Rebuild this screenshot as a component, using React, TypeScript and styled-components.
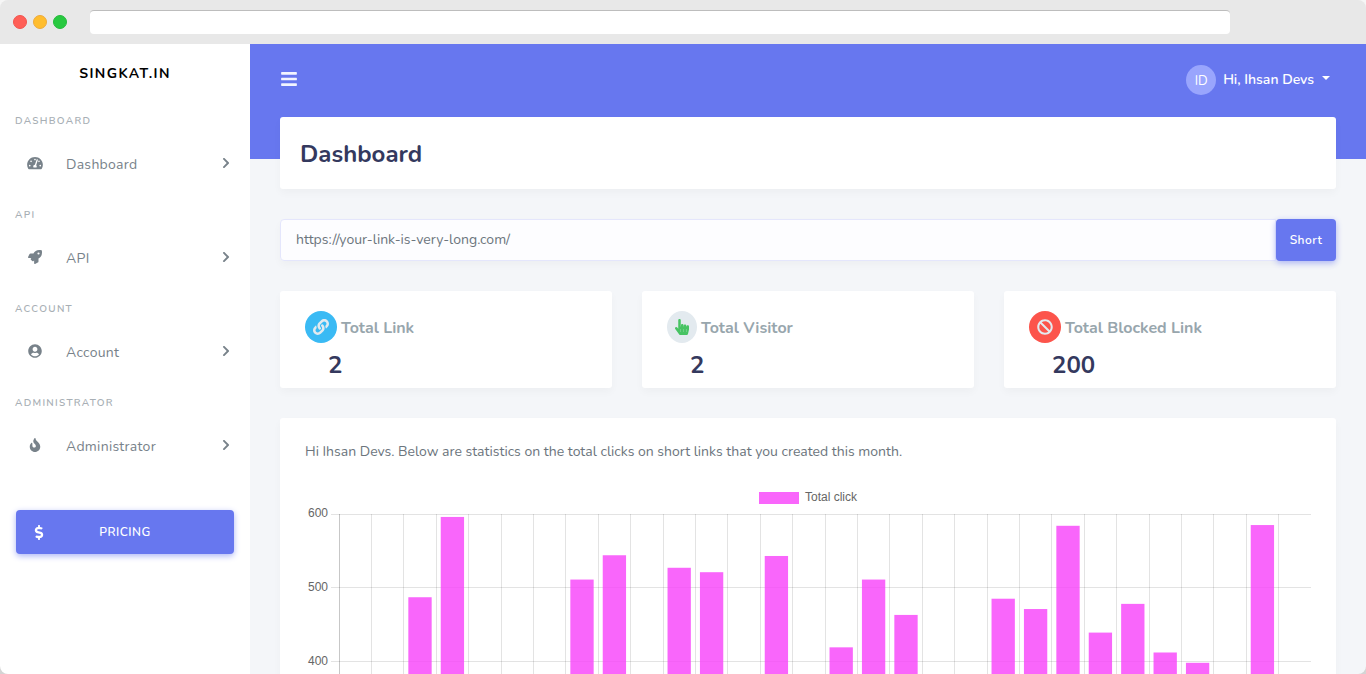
import React from 'react';
import styled, { createGlobalStyle } from 'styled-components';
import type { IconType } from 'react-icons';
import {
  FaBan,
  FaBars,
  FaChevronRight,
  FaDollarSign,
  FaFire,
  FaHandPointer,
  FaLink,
  FaRocket,
  FaTachometerAlt,
  FaUserCircle,
} from 'react-icons/fa';

const color = {
  primary: '#6777ef',
  heading: '#34395e',
  text: '#6c757d',
  muted: '#98a6ad',
  menu: '#78828a',
  light: '#e3eaef',
  canvas: '#f4f6f9',
};

const GlobalStyle = createGlobalStyle`
  *, *::before, *::after { box-sizing: border-box; }
  body {
    margin: 0;
    background: linear-gradient(#f6f6f6, #d4d4d4);
    color: ${color.text};
    font-family: Nunito, "Open Sans", sans-serif;
    font-size: 14px;
    line-height: 24px;
  }
  button, input { font: inherit; }
  h1, h2, p, ul { margin: 0; padding: 0; }
  a { color: inherit; text-decoration: none; }
`;

/* ---------- window frame ---------- */

const Frame = styled.div`
  display: flex;
  flex-direction: column;
  height: 100vh;
  border-radius: 8px;
  overflow: hidden;
`;

const TitleBar = styled.div`
  display: flex;
  align-items: center;
  flex: none;
  height: 44px;
  padding: 0 136px 0 13px;
  background: #e8e8e8;
`;

const Lights = styled.div`
  display: flex;
  gap: 6px;
  width: 77px;
`;

const Light = styled.span<{ $fill: string; $edge: string }>`
  width: 14px;
  height: 14px;
  border: 1px solid ${(p) => p.$edge};
  border-radius: 50%;
  background: ${(p) => p.$fill};
`;

const AddressBar = styled.input`
  flex: 1;
  min-width: 0;
  height: 24px;
  padding: 0 8px;
  border: 0;
  border-top: 1px solid #bdbdbd;
  border-radius: 4px;
  background: #fff;
`;

const Page = styled.div`
  display: flex;
  flex: 1;
  min-height: 0;
`;

/* ---------- sidebar ---------- */

const Sidebar = styled.aside`
  flex: none;
  width: 250px;
  padding-top: 1px;
  background: #fff;
  overflow: hidden;
`;

const Brand = styled.a`
  display: block;
  color: #000;
  font-weight: 700;
  line-height: 58px;
  letter-spacing: 0.1em;
  text-align: center;
`;

const MenuTitle = styled.h2`
  padding: 0 15px;
  color: #a8afb5;
  font-size: 10px;
  font-weight: 600;
  line-height: 37px;
  letter-spacing: 0.13em;
  text-transform: uppercase;
`;

const MenuLink = styled.a`
  display: flex;
  align-items: center;
  height: 50px;
  margin-bottom: 7px;
  padding: 0 18px 0 20px;
  color: ${color.menu};
  letter-spacing: 0.02em;
`;

const MenuIcon = styled.span`
  display: flex;
  justify-content: center;
  width: 30px;
  margin-right: 16px;
  padding-bottom: 4px;

  svg {
    width: 16px;
    height: 14px;
  }
`;

const MenuLabel = styled.span`
  flex: 1;
`;

const Chevron = styled(FaChevronRight)`
  width: 12px;
  height: 12px;
  margin-bottom: 4px;
`;

const Pricing = styled.a`
  display: grid;
  grid-template-columns: 14px 1fr 14px;
  align-items: center;
  height: 44px;
  margin: 38px 16px 0;
  padding: 0 16px;
  border-radius: 4px;
  background: ${color.primary};
  box-shadow: 0 2px 6px #acb5f6;
  color: #fff;
  font-size: 12px;
  font-weight: 600;
  letter-spacing: 0.04em;
  text-align: center;

  svg {
    width: 14px;
    height: 15px;
  }
`;

/* ---------- main column ---------- */

const Main = styled.main`
  flex: 1;
  min-width: 0;
  padding: 0 30px 30px;
  overflow-y: auto;
  scrollbar-width: none;
  background: linear-gradient(${color.primary} 115px, ${color.canvas} 115px);
`;

const Navbar = styled.header`
  display: flex;
  align-items: center;
  justify-content: space-between;
  height: 73px;
  padding-bottom: 2px;
  color: #fff;
`;

const IconButton = styled.button`
  display: flex;
  padding: 0 0 2px;
  border: 0;
  background: none;
  color: #f2f4ff;

  svg {
    width: 18px;
    height: 18px;
  }
`;

const UserButton = styled.button`
  display: flex;
  align-items: center;
  gap: 8px;
  padding: 0 6px 0 0;
  border: 0;
  background: none;
  color: #fff;
  font-weight: 600;
`;

const Avatar = styled.span`
  width: 30px;
  height: 30px;
  margin-right: -1px;
  border-radius: 50%;
  background: #99a5fd;
  color: #fff;
  font-size: 13px;
  font-weight: 400;
  line-height: 32px;
`;

const Caret = styled.span`
  margin-bottom: 4px;
  border: 4px solid transparent;
  border-top-color: currentColor;
  border-bottom-width: 0;
`;

const Card = styled.section`
  border-radius: 3px;
  background: #fff;
  box-shadow: 0 4px 8px rgba(0, 0, 0, 0.03);
`;

const Stack = styled.div`
  display: flex;
  flex-direction: column;
  gap: 30px;
`;

const HeadingCard = styled(Card)`
  padding: 23px 20px 21px;
`;

const Heading = styled.h1`
  color: ${color.heading};
  font-size: 24px;
  font-weight: 700;
  line-height: 28px;
`;

const ShortenForm = styled.form`
  display: flex;
  height: 42px;
  border-radius: 4px;
  box-shadow: 0 4px 8px rgba(0, 0, 0, 0.03);
`;

const LinkInput = styled.input`
  flex: 1;
  min-width: 0;
  padding: 0 15px;
  border: 1px solid #e4e6fc;
  border-radius: 4px 0 0 4px;
  background: #fdfdff;
  color: ${color.text};

  &::placeholder {
    color: ${color.text};
    opacity: 1;
  }
`;

const ShortButton = styled.button`
  min-width: 60px;
  padding: 0 12px;
  border: 0;
  border-radius: 4px;
  background: ${color.primary};
  box-shadow: 0 2px 6px #acb5f6;
  color: #fff;
  font-size: 12px;
  font-weight: 600;
  letter-spacing: 0.04em;
`;

const Stats = styled.div`
  display: grid;
  grid-template-columns: repeat(3, 1fr);
  gap: 30px;
`;

const StatCard = styled(Card)`
  padding: 20px 25px 0;
`;

const StatTitle = styled.h2`
  display: flex;
  align-items: center;
  gap: 4px;
  color: ${color.muted};
  font-size: 16px;
  font-weight: 700;
`;

const StatLabel = styled.span`
  padding-top: 2px;
`;

const Badge = styled.span<{ $bg: string; $fg: string; $iconWidth: number }>`
  display: flex;
  padding: 8px;
  border-radius: 50%;
  background: ${(p) => p.$bg};
  color: ${(p) => p.$fg};

  svg {
    width: ${(p) => p.$iconWidth}px;
    height: 16px;
  }
`;

const StatValue = styled.p`
  padding-left: 23px;
  color: ${color.heading};
  font-size: 24px;
  font-weight: 700;
  line-height: 45px;
`;

const ChartCard = styled(Card)`
  padding: 22px 25px 25px;
`;

const Intro = styled.p`
  margin-bottom: 18px;
`;

const ChartSvg = styled.svg`
  display: block;
  width: 100%;
  height: auto;

  text {
    fill: #666;
    font-family: "Liberation Sans", Arial, sans-serif;
    font-size: 12px;
  }
`;

/* ---------- data ---------- */

const menu: { title: string; label: string; icon: IconType }[] = [
  { title: 'Dashboard', label: 'Dashboard', icon: FaTachometerAlt },
  { title: 'API', label: 'API', icon: FaRocket },
  { title: 'Account', label: 'Account', icon: FaUserCircle },
  { title: 'Administrator', label: 'Administrator', icon: FaFire },
];

interface Stat {
  label: string;
  value: number;
  icon: IconType;
  iconWidth: number;
  bg: string;
  fg: string;
}

const stats: Stat[] = [
  { label: 'Total Link', value: 2, icon: FaLink, iconWidth: 16, bg: '#3abaf4', fg: color.light },
  { label: 'Total Visitor', value: 2, icon: FaHandPointer, iconWidth: 14, bg: color.light, fg: '#47c363' },
  { label: 'Total Blocked Link', value: 200, icon: FaBan, iconWidth: 16, bg: '#fc544b', fg: color.light },
];

const clicks = [
  0, 0, 487, 596, 0, 0, 0, 511, 544, 0, 527, 521, 0, 543, 0, 419, 511, 463, 0, 0, 485, 471, 584,
  439, 478, 412, 398, 0, 585, 0,
];

/* ---------- chart ---------- */

const ticks = [0, 100, 200, 300, 400, 500, 600];
const plot = { left: 34, right: 1006, top: 32, bottom: 474 };
const slot = (plot.right - plot.left) / clicks.length;
const yOf = (value: number) => plot.bottom - ((plot.bottom - plot.top) * value) / 600;

function ClickChart() {
  return (
    <ChartSvg viewBox="0 0 1006 503" role="img" aria-label="Total click">
      <rect x={454} y={10} width={40} height={12} fill="#f966fb" />
      <text x={500} y={19}>Total click</text>
      <g fill="#000" fillOpacity={0.11}>
        {ticks.map((v) => (
          <rect key={v} x={26} y={Math.floor(yOf(v))} width={980} height={1} />
        ))}
        {clicks.map((_, i) => (
          <rect
            key={i}
            x={Math.floor(plot.left + i * slot)}
            y={plot.top}
            width={1}
            height={plot.bottom - plot.top + 9}
            fillOpacity={i === 0 ? 0.22 : 0.11}
          />
        ))}
      </g>
      {ticks.map((v) => (
        <text key={v} x={23} y={Math.ceil(yOf(v)) + 3} textAnchor="end">{v}</text>
      ))}
      <g fill="#f740fa" fillOpacity={0.8}>
        {clicks.map((v, i) =>
          v > 0 ? (
            <rect
              key={i}
              x={plot.left + i * slot + slot * 0.14}
              y={yOf(v)}
              width={slot * 0.72}
              height={plot.bottom - yOf(v)}
            />
          ) : null,
        )}
      </g>
    </ChartSvg>
  );
}

export default function App() {
  return (
    <>
      <GlobalStyle />
      <Frame>
        <TitleBar>
          <Lights>
            <Light $fill="#ff5f57" $edge="#f2544d" />
            <Light $fill="#ffbd2e" $edge="#eeaa3a" />
            <Light $fill="#28c940" $edge="#24ba3b" />
          </Lights>
          <AddressBar aria-label="Address" />
        </TitleBar>
        <Page>
          <Sidebar>
            <Brand href="#">SINGKAT.IN</Brand>
            <nav>
              {menu.map(({ title, label, icon: Icon }) => (
                <React.Fragment key={title}>
                  <MenuTitle>{title}</MenuTitle>
                  <MenuLink href="#">
                    <MenuIcon><Icon /></MenuIcon>
                    <MenuLabel>{label}</MenuLabel>
                    <Chevron />
                  </MenuLink>
                </React.Fragment>
              ))}
            </nav>
            <Pricing href="#">
              <FaDollarSign />
              <span>PRICING</span>
            </Pricing>
          </Sidebar>
          <Main>
            <Navbar>
              <IconButton type="button" aria-label="Toggle sidebar"><FaBars /></IconButton>
              <UserButton type="button">
                <Avatar>ID</Avatar>
                <span>Hi, Ihsan Devs</span>
                <Caret />
              </UserButton>
            </Navbar>
            <Stack>
              <HeadingCard>
                <Heading>Dashboard</Heading>
              </HeadingCard>
              <ShortenForm>
                <LinkInput type="url" aria-label="Link" placeholder="https://your-link-is-very-long.com/" />
                <ShortButton type="button">Short</ShortButton>
              </ShortenForm>
              <Stats>
                {stats.map(({ label, value, icon: Icon, iconWidth, bg, fg }) => (
                  <StatCard key={label}>
                    <StatTitle>
                      <Badge $bg={bg} $fg={fg} $iconWidth={iconWidth}><Icon /></Badge>
                      <StatLabel>{label}</StatLabel>
                    </StatTitle>
                    <StatValue>{value}</StatValue>
                  </StatCard>
                ))}
              </Stats>
              <ChartCard>
                <Intro>
                  Hi Ihsan Devs. Below are statistics on the total clicks on short links that you
                  created this month.
                </Intro>
                <ClickChart />
              </ChartCard>
            </Stack>
          </Main>
        </Page>
      </Frame>
    </>
  );
}
